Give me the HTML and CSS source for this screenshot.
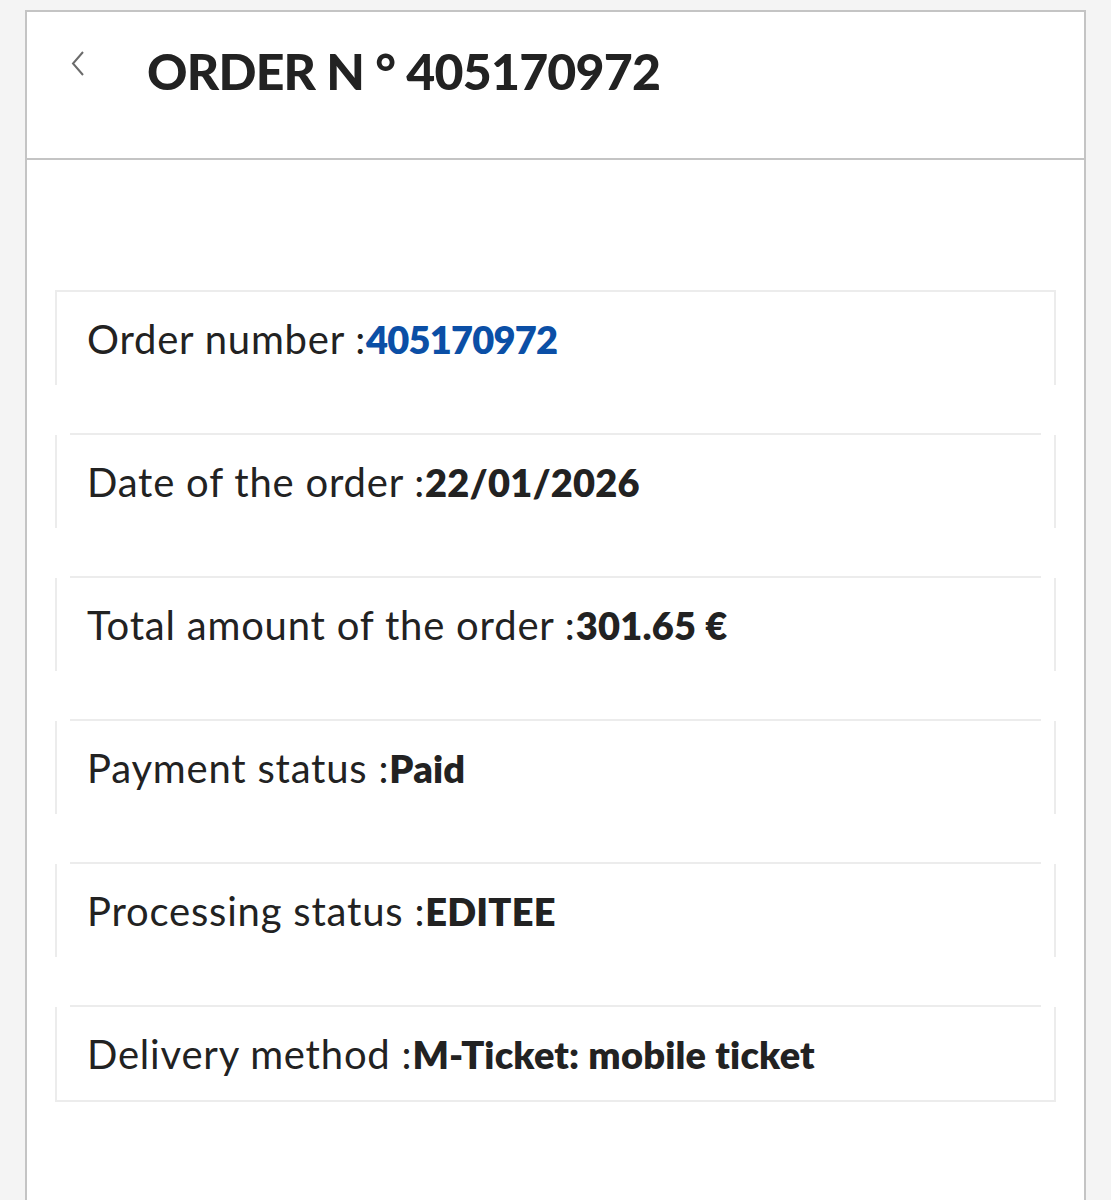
FILE: index.html
```html
<!DOCTYPE html>
<html>
<head>
  <title>Order details</title>
  <link rel="stylesheet" href="styles.css">
</head>
<body>
  <div class="page">
    <div class="header">
      <a class="back" href="#">
        <svg width="14" height="28" viewBox="0 0 14 28"><path d="M12 2 L2 13.5 L12 25" fill="none" stroke="#6b6b6b" stroke-width="2"/></svg>
      </a>
      <h1>ORDER N ° 405170972</h1>
    </div>

    <div class="details">
      <div class="item first">
        <div class="line"></div>
        <div class="body">Order number :<span class="link">405170972</span></div>
      </div>
      <div class="item">
        <div class="line"></div>
        <div class="body">Date of the order :<b>22/01/2026</b></div>
      </div>
      <div class="item">
        <div class="line"></div>
        <div class="body">Total amount of the order :<b>301.65 €</b></div>
      </div>
      <div class="item">
        <div class="line"></div>
        <div class="body">Payment status :<b>Paid</b></div>
      </div>
      <div class="item">
        <div class="line"></div>
        <div class="body">Processing status :<b>EDITEE</b></div>
      </div>
      <div class="item last">
        <div class="line"></div>
        <div class="body">Delivery method :<b>M-Ticket: mobile ticket</b></div>
      </div>
    </div>
  </div>
</body>
</html>
```

FILE: styles.css
```css
body {
  margin: 0;
  background-color: #f4f4f4;
  font-family: Lato, "Open Sans", sans-serif;
  color: #222;
}
.page {
  margin: 10px 25px 0 25px;
  min-height: 1190px;
  background: #fff;
  border: 2px solid #c4c4c4;
  border-bottom: none;
}
.header {
  height: 146px;
  border-bottom: 2px solid #c4c4c4;
  display: flex;
  align-items: flex-start;
}
.back {
  margin: 38px 0 0 44px;
  display: block;
}
h1 {
  margin: 27px 0 0 62px;
  font-size: 50px;
  font-weight: 900;
  letter-spacing: -0.8px;
  color: #222;
  line-height: 64px;
}
.details {
  margin: 130px 28px 0 28px;
}
.line {
  border-top: 2px solid #ececec;
  margin: 0 15px;
}
.first .line {
  margin: 0;
}
.body {
  height: 93px;
  border-left: 2px solid #ececec;
  border-right: 2px solid #ececec;
  display: flex;
  align-items: center;
  padding-left: 30px;
  font-size: 40px;
  letter-spacing: 0.8px;
}
.item {
  padding-bottom: 48px;
}
.item.last {
  padding-bottom: 0;
}
.last .body {
  border-bottom: 2px solid #ececec;
}
.body b,
.link {
  font-weight: 800;
  font-size: 38px;
  letter-spacing: 0.2px;
}
.link {
  color: #0b4fa6;
  letter-spacing: -0.8px;
}
```
